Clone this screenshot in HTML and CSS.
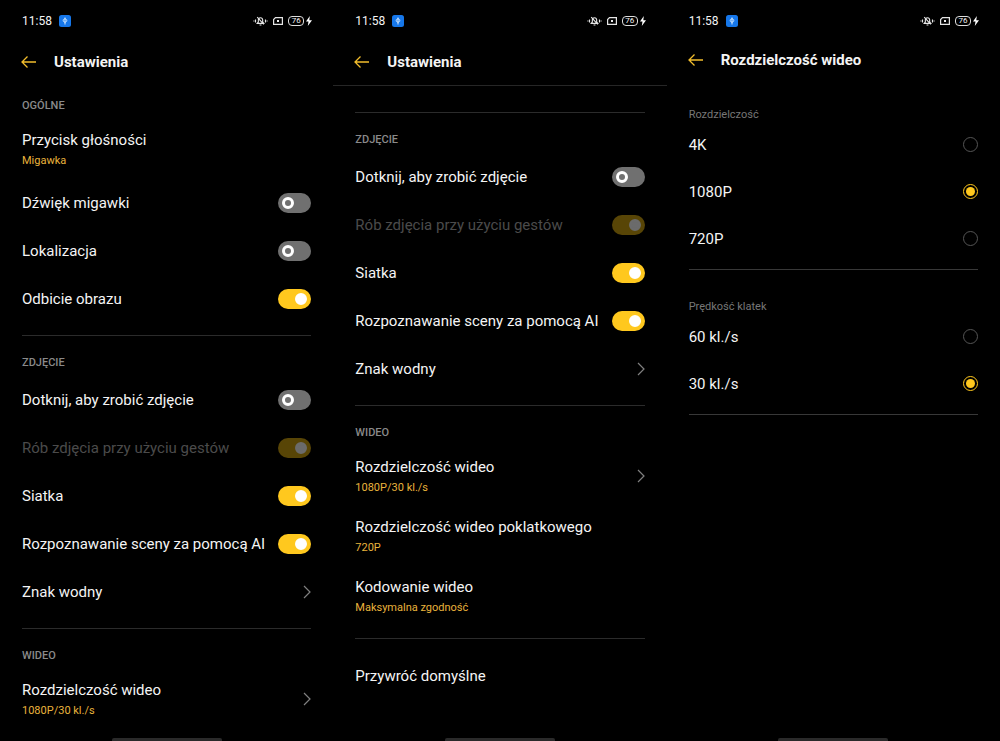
FILE: index.html
```html
<!DOCTYPE html>
<html lang="pl">
<head>
<meta charset="utf-8">
<meta name="viewport" content="width=device-width, initial-scale=1">
<title>Ustawienia</title>
<link rel="stylesheet" href="styles.css">
</head>
<body>
<svg class="sprite" aria-hidden="true">
  <symbol id="app" viewBox="0 0 12 12"><rect width="12" height="12" rx="2.5" fill="#1677ea"/><path d="M6 2.500v7M6 3.500L8.200 5.500 6 7.500 3.800 5.500z" fill="none" stroke="#d5eaff" stroke-width="1"/></symbol>
  <symbol id="mute" viewBox="0 0 16 10"><path d="M4.500 7.500h7L10.300 6V4C10.300 2.500 9.400 1.500 8 1.500S5.700 2.500 5.700 4v2zM7 9.300h2M4.500 .8l7 7.700M2.700 3.500v3M13.300 3.500v3M1 4.500v1M15 4.500v1" fill="none" stroke="#e4e4e4" stroke-width="1.200"/></symbol>
  <symbol id="card" viewBox="0 0 10 8"><path d="M2.500.6h6.900v6.800H.6V2.500z" fill="none" stroke="#e4e4e4" stroke-width="1.200"/><rect x="4" y="3" width="2" height="2" fill="#eee"/></symbol>
  <symbol id="bolt" viewBox="0 0 6 10"><path d="M3.800 0L0 5.500h2.500L1.800 10 6 4.200H3.300z" fill="#fff"/></symbol>
  <symbol id="back" viewBox="0 0 16 14"><path d="M15 7H1M6.500 1.500L1 7l5.500 5.500" fill="none" stroke="#f2bd2c" stroke-width="1.300"/></symbol>
  <symbol id="next" viewBox="0 0 8 14"><path d="M1 1l6 6-6 6" fill="none" stroke="#808080" stroke-width="1.200"/></symbol>
</svg>
<main class="screens">
  <section class="screen">
    <div class="status"><span class="time">11:58</span><svg class="app"><use href="#app"/></svg><span class="indicators"><svg class="mute"><use href="#mute"/></svg><svg class="card"><use href="#card"/></svg><span class="power"><span class="battery">76</span><svg class="bolt"><use href="#bolt"/></svg></span></span></div>
    <header class="header"><button class="back" aria-label="Wstecz"><svg><use href="#back"/></svg></button><h1>Ustawienia</h1></header>
    <div class="group first">
      <h2>OGÓLNE</h2>
      <button class="row tall"><span>Przycisk głośności<small>Migawka</small></span></button>
      <label class="row">Dźwięk migawki<input class="switch" type="checkbox" role="switch"></label>
      <label class="row">Lokalizacja<input class="switch" type="checkbox" role="switch"></label>
      <label class="row">Odbicie obrazu<input class="switch" type="checkbox" role="switch" checked></label>
    </div>
    <div class="group">
      <h2>ZDJĘCIE</h2>
      <label class="row">Dotknij, aby zrobić zdjęcie<input class="switch" type="checkbox" role="switch"></label>
      <label class="row disabled">Rób zdjęcia przy użyciu gestów<input class="switch" type="checkbox" role="switch" checked disabled></label>
      <label class="row">Siatka<input class="switch" type="checkbox" role="switch" checked></label>
      <label class="row">Rozpoznawanie sceny za pomocą AI<input class="switch" type="checkbox" role="switch" checked></label>
      <button class="row">Znak wodny<svg class="next"><use href="#next"/></svg></button>
    </div>
    <div class="group last">
      <h2>WIDEO</h2>
      <button class="row tall"><span>Rozdzielczość wideo<small>1080P/30 kl./s</small></span><svg class="next"><use href="#next"/></svg></button>
    </div>
    <div class="home"></div>
  </section>

  <section class="screen">
    <div class="status"><span class="time">11:58</span><svg class="app"><use href="#app"/></svg><span class="indicators"><svg class="mute"><use href="#mute"/></svg><svg class="card"><use href="#card"/></svg><span class="power"><span class="battery">76</span><svg class="bolt"><use href="#bolt"/></svg></span></span></div>
    <header class="header scrolled"><button class="back" aria-label="Wstecz"><svg><use href="#back"/></svg></button><h1>Ustawienia</h1></header>
    <div class="group">
      <h2>ZDJĘCIE</h2>
      <label class="row">Dotknij, aby zrobić zdjęcie<input class="switch" type="checkbox" role="switch"></label>
      <label class="row disabled">Rób zdjęcia przy użyciu gestów<input class="switch" type="checkbox" role="switch" checked disabled></label>
      <label class="row">Siatka<input class="switch" type="checkbox" role="switch" checked></label>
      <label class="row">Rozpoznawanie sceny za pomocą AI<input class="switch" type="checkbox" role="switch" checked></label>
      <button class="row">Znak wodny<svg class="next"><use href="#next"/></svg></button>
    </div>
    <div class="group">
      <h2>WIDEO</h2>
      <button class="row tall"><span>Rozdzielczość wideo<small>1080P/30 kl./s</small></span><svg class="next"><use href="#next"/></svg></button>
      <button class="row tall"><span>Rozdzielczość wideo poklatkowego<small>720P</small></span></button>
      <button class="row tall"><span>Kodowanie wideo<small>Maksymalna zgodność</small></span></button>
    </div>
    <div class="group last">
      <button class="row">Przywróć domyślne</button>
    </div>
    <div class="home"></div>
  </section>

  <section class="screen">
    <div class="status"><span class="time">11:58</span><svg class="app"><use href="#app"/></svg><span class="indicators"><svg class="mute"><use href="#mute"/></svg><svg class="card"><use href="#card"/></svg><span class="power"><span class="battery">76</span><svg class="bolt"><use href="#bolt"/></svg></span></span></div>
    <header class="header compact"><button class="back" aria-label="Wstecz"><svg><use href="#back"/></svg></button><h1>Rozdzielczość wideo</h1></header>
    <fieldset class="options">
      <legend>Rozdzielczość</legend>
      <label class="option">4K<input class="radio" type="radio" name="resolution"></label>
      <label class="option">1080P<input class="radio" type="radio" name="resolution" checked></label>
      <label class="option">720P<input class="radio" type="radio" name="resolution"></label>
    </fieldset>
    <fieldset class="options">
      <legend>Prędkość klatek</legend>
      <label class="option">60 kl./s<input class="radio" type="radio" name="rate"></label>
      <label class="option">30 kl./s<input class="radio" type="radio" name="rate" checked></label>
    </fieldset>
    <div class="home"></div>
  </section>
</main>
</body>
</html>
```
FILE: styles.css
```css
*,
*::before {
  box-sizing: border-box;
}

body {
  margin: 0;
  background: #000;
  color: #f4f4f4;
  font: 15px/20px Roboto, "Noto Sans", sans-serif;
}

.sprite {
  position: absolute;
  width: 0;
  height: 0;
}

svg {
  display: block;
}

button {
  padding: 0;
  border: 0;
  background: none;
  color: inherit;
  font: inherit;
  text-align: left;
}

.screens {
  display: grid;
  grid-template-columns: repeat(3, minmax(0, 1fr));
  min-height: 100vh;
}

.screen {
  display: flex;
  flex-direction: column;
}

.status {
  display: flex;
  align-items: center;
  height: 42px;
  padding: 0 21px 0 22px;
  font-size: 12px;
}

.app {
  width: 12px;
  height: 12px;
  margin-left: 7px;
}

.indicators {
  display: flex;
  align-items: center;
  gap: 5px;
  margin-left: auto;
}

.mute {
  width: 15px;
  height: 10px;
}

.card {
  width: 10px;
  height: 8px;
}

.power {
  display: flex;
  align-items: center;
  gap: 2px;
}

.battery {
  width: 16px;
  height: 10px;
  border: 1px solid #ddd;
  border-radius: 4px;
  font-size: 8px;
  line-height: 8px;
  text-align: center;
}

.bolt {
  width: 6px;
  height: 10px;
}

.header {
  display: flex;
  align-items: center;
  gap: 17px;
  height: 40px;
  padding: 0 21px;
}

.header.compact {
  height: 36px;
}

.header.scrolled {
  height: 44px;
  padding-bottom: 3px;
  margin-bottom: 13px;
  border-bottom: 1px solid #262626;
}

.back svg {
  width: 16px;
  height: 14px;
}

h1 {
  margin: 0;
  font-size: 15px;
  font-weight: 700;
}

h2 {
  margin: 0;
  color: #8a8a8a;
  font-size: 11px;
  font-weight: 500;
  line-height: 25px;
}

.group {
  display: flex;
  flex-direction: column;
  margin: 13px 22px 0;
  padding-top: 14px;
  border-top: 1px solid #2b2b2b;
}

.group.first {
  margin-top: 0;
  padding-top: 11px;
  border-top: 0;
}

.group.last .row:first-child {
  height: 44px;
}

.row {
  display: flex;
  align-items: center;
  justify-content: space-between;
  height: 48px;
  padding-top: 1px;
}

.row.tall {
  height: 60px;
}

.row.tall span {
  padding-top: 4px;
}

.row.disabled {
  color: #4b4b4b;
}

small {
  display: block;
  color: #e9b33c;
  font-size: 11px;
  line-height: 21px;
}

.next {
  width: 8px;
  height: 14px;
}

.switch {
  display: flex;
  align-items: center;
  appearance: none;
  width: 33px;
  height: 20px;
  margin: 0;
  padding: 0 4px;
  border-radius: 10px;
  background: #707070;
}

.switch::before {
  content: "";
  width: 12px;
  height: 12px;
  border: 3px solid #fff;
  border-radius: 50%;
}

.switch:checked {
  justify-content: flex-end;
  background: #ffc81e;
}

.switch:checked::before {
  background: #fff;
}

.switch:disabled {
  background: #584506;
}

.switch:disabled::before {
  border-color: #6b6b6b;
  background: #6b6b6b;
}

.options {
  display: flex;
  flex-direction: column;
  min-width: 0;
  margin: 30px 22px 0;
  padding: 0 0 7px;
  border: 0;
  border-bottom: 1px solid #383838;
}

legend {
  padding: 0;
  color: #777;
  font-size: 11px;
  line-height: 13px;
}

.option {
  display: flex;
  align-items: center;
  justify-content: space-between;
  height: 47px;
}

.radio {
  appearance: none;
  width: 15px;
  height: 15px;
  margin: 0;
  border: 1px solid #555;
  border-radius: 50%;
}

.radio:checked {
  padding: 2px;
  border-color: #ffc81e;
  background: #ffc81e content-box;
}

.home {
  width: 33%;
  height: 3px;
  margin: auto auto 0;
  border-radius: 2px 2px 0 0;
  background: #2a2a2a;
}
```
